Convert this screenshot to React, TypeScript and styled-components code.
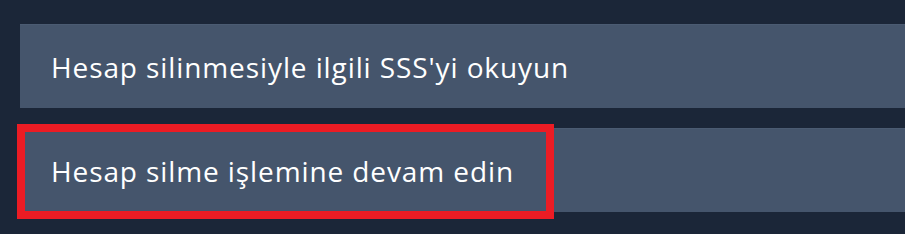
import styled, { createGlobalStyle } from "styled-components";

const GlobalStyle = createGlobalStyle`
  html, body {
    margin: 0;
    padding: 0;
    background: #1b2638;
    overflow: hidden;
  }
`;

const Page = styled.div`
  width: 905px;
  height: 234px;
  display: flex;
  flex-direction: column;
  gap: 20px;
  padding: 24px 0 0 20px;
  box-sizing: border-box;
  font-family: "Open Sans", "Liberation Sans", sans-serif;
`;

const OptionButton = styled.div`
  position: relative;
  height: 84px;
  display: flex;
  align-items: center;
  padding-left: 31px;
  background: #45556c;
  border-top: 1px solid #4b5b72;
  box-sizing: border-box;
  color: #ffffff;
  font-size: 28px;
  letter-spacing: 0.9px;
  cursor: pointer;
`;

const Highlight = styled.div`
  position: absolute;
  left: -3px;
  top: -5px;
  width: 537px;
  height: 95px;
  border: 8px solid #ec1c24;
  box-sizing: border-box;
  pointer-events: none;
`;

const options = [
  { label: "Hesap silinmesiyle ilgili SSS'yi okuyun", marked: false },
  { label: "Hesap silme işlemine devam edin", marked: true },
];

const App = () => {
  return (
    <>
      <GlobalStyle />
      <Page>
        {options.map((o) => (
          <OptionButton key={o.label}>
            {o.label}
            {o.marked ? <Highlight /> : null}
          </OptionButton>
        ))}
      </Page>
    </>
  );
};

export default App;
